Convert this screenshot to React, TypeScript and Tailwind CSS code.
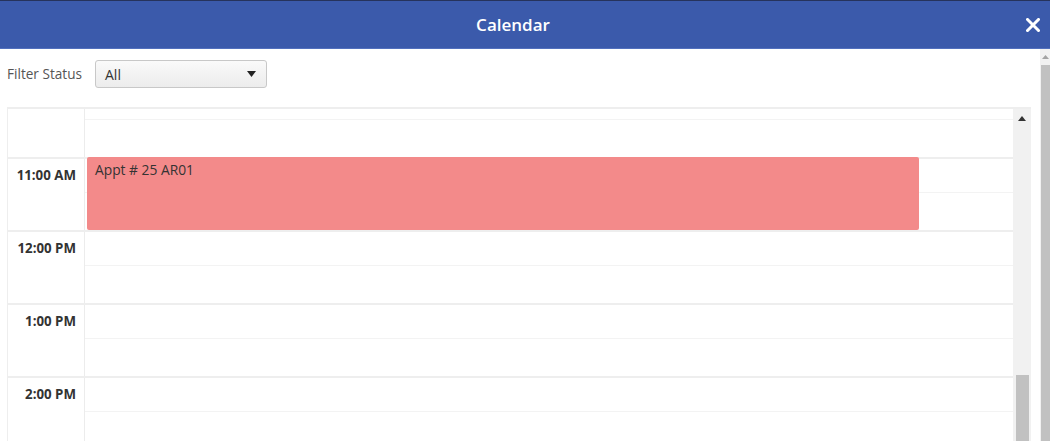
import React from "react";

const hours = ["11:00 AM", "12:00 PM", "1:00 PM", "2:00 PM"];

function HourRow({ label, children }: { label: string; children?: React.ReactNode }) {
  return (
    <div className="flex h-[73px] shrink-0 border-t-2 border-[#eeeeee]">
      <div className="w-[77px] shrink-0 border-r border-[#ececec] pr-[8px] pt-[7px] text-right text-[13.3px] font-bold leading-[18px] text-[#333]">
        {label}
      </div>
      <div className="relative flex flex-1 flex-col">
        <div className="h-[34px] shrink-0 border-b border-[#f3f3f3]" />
        <div className="flex-1" />
        {children}
      </div>
    </div>
  );
}

export default function App() {
  return (
    <div
      className="flex h-[441px] w-[1050px] flex-col overflow-hidden bg-white"
      style={{ fontFamily: '"Open Sans", "Noto Sans", sans-serif' }}
    >
      <div className="h-[1px] shrink-0 bg-[#26335c]" />
      <div className="relative flex h-[48px] shrink-0 items-center justify-center border-b border-[#5270bd] bg-[#3b5aab] pr-[24px]">
        <span className="text-[17px] font-semibold leading-none text-white">Calendar</span>
        <svg
          className="absolute right-[10px] top-[17px]"
          width="14"
          height="14"
          viewBox="0 0 14 14"
        >
          <path d="M1.5 1.5 L12.5 12.5 M12.5 1.5 L1.5 12.5" stroke="white" strokeWidth="3" strokeLinecap="square" />
        </svg>
      </div>
      <div className="flex min-h-0 flex-1">
        <div className="flex min-w-0 flex-1 flex-col pl-[7px] pr-[9px]">
          <div className="flex h-[58px] shrink-0 items-start pt-[11px]">
            <span className="mt-[5px] w-[88px] text-[13.6px] leading-[18px] text-[#555]">Filter Status</span>
            <div className="flex h-[28px] w-[172px] items-center justify-between rounded-[3px] border border-[#c8c8c8] bg-gradient-to-b from-[#fafafa] to-[#ececec] pl-[9px] pr-[10px]">
              <span className="text-[14px] text-[#333]">All</span>
              <svg width="9" height="6" viewBox="0 0 9 6">
                <path d="M0 0 H9 L4.5 6 Z" fill="#222" />
              </svg>
            </div>
          </div>
          <div className="flex min-h-0 flex-1 border-l border-t-2 border-[#eeeeee]">
            <div className="relative flex min-w-0 flex-1 flex-col">
              <div className="flex h-[48px] shrink-0">
                <div className="w-[77px] shrink-0 border-r border-[#ececec]" />
                <div className="flex flex-1 flex-col">
                  <div className="h-[11px] border-b border-[#f3f3f3]" />
                </div>
              </div>
              <HourRow label={hours[0]}>
                <div className="absolute left-[2px] top-[-2px] h-[73px] w-[832px] rounded-[2px] bg-[#f38a8a] pl-[8px] pt-[4px] text-[13.8px] leading-[18px] text-[#333]">
                  Appt # 25 AR01
                </div>
              </HourRow>
              <HourRow label={hours[1]} />
              <HourRow label={hours[2]} />
              <HourRow label={hours[3]} />
            </div>
            <div className="flex w-[18px] shrink-0 flex-col items-center bg-[#f1f1f1]">
              <svg className="mt-[7px]" width="8" height="5" viewBox="0 0 8 5">
                <path d="M0 5 L4 0 L8 5 Z" fill="#333" />
              </svg>
              <div className="flex-1" />
              <div className="h-[66px] w-[13px] bg-[#c1c1c1]" />
            </div>
          </div>
        </div>
        <div className="flex w-[10px] shrink-0 flex-col items-center bg-[#f1f1f1]">
          <svg className="mt-[6px]" width="7" height="4" viewBox="0 0 7 4">
            <path d="M0 4 L3.5 0 L7 4 Z" fill="#a3a3a3" />
          </svg>
          <div className="mt-[6px] w-[9px] flex-1 bg-[#c1c1c1]" />
        </div>
      </div>
    </div>
  );
}
